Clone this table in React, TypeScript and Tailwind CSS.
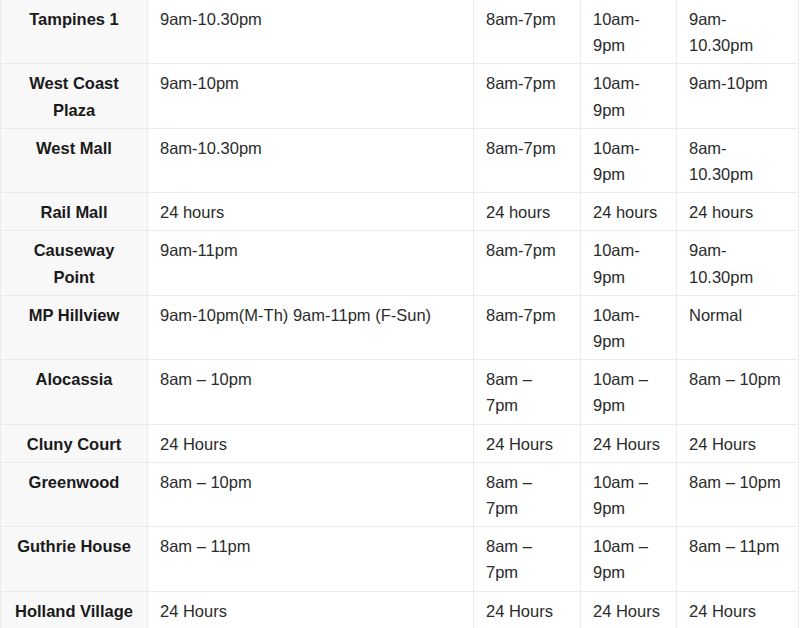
const ROWS: [string, string, string, string, string][] = [
  ["Tampines 1", "9am-10.30pm", "8am-7pm", "10am-9pm", "9am-10.30pm"],
  ["West Coast Plaza", "9am-10pm", "8am-7pm", "10am-9pm", "9am-10pm"],
  ["West Mall", "8am-10.30pm", "8am-7pm", "10am-9pm", "8am-10.30pm"],
  ["Rail Mall", "24 hours", "24 hours", "24 hours", "24 hours"],
  ["Causeway Point", "9am-11pm", "8am-7pm", "10am-9pm", "9am-10.30pm"],
  ["MP Hillview", "9am-10pm(M-Th) 9am-11pm (F-Sun)", "8am-7pm", "10am-9pm", "Normal"],
  ["Alocassia", "8am – 10pm", "8am – 7pm", "10am – 9pm", "8am – 10pm"],
  ["Cluny Court", "24 Hours", "24 Hours", "24 Hours", "24 Hours"],
  ["Greenwood", "8am – 10pm", "8am – 7pm", "10am – 9pm", "8am – 10pm"],
  ["Guthrie House", "8am – 11pm", "8am – 7pm", "10am – 9pm", "8am – 11pm"],
  ["Holland Village", "24 Hours", "24 Hours", "24 Hours", "24 Hours"],
];

export default function App() {
  return (
    <div className="w-[800px] h-[628px] overflow-hidden bg-white">
      <table
        className="-mt-[1px] w-[798px] table-fixed border-collapse text-[16.5px] leading-[26.2px] text-[#2b2b2b]"
        style={{ fontFamily: '"Liberation Sans", Arial, sans-serif' }}
      >
        <colgroup>
          <col className="w-[147px]" />
          <col className="w-[326px]" />
          <col className="w-[107px]" />
          <col className="w-[96px]" />
          <col className="w-[122px]" />
        </colgroup>
        <tbody>
          {ROWS.map((row) => (
            <tr key={row[0]}>
              <td className="border border-[#ebebeb] bg-[#f8f8f8] px-[12px] pt-[6px] pb-[5px] text-center align-top font-bold text-[#1a1a1a]">
                {row[0]}
              </td>
              {row.slice(1).map((cell, i) => (
                <td
                  key={i}
                  className="border border-[#ebebeb] pl-[12px] pr-[12px] pt-[6px] pb-[5px] align-top"
                >
                  {cell}
                </td>
              ))}
            </tr>
          ))}
        </tbody>
      </table>
    </div>
  );
}
